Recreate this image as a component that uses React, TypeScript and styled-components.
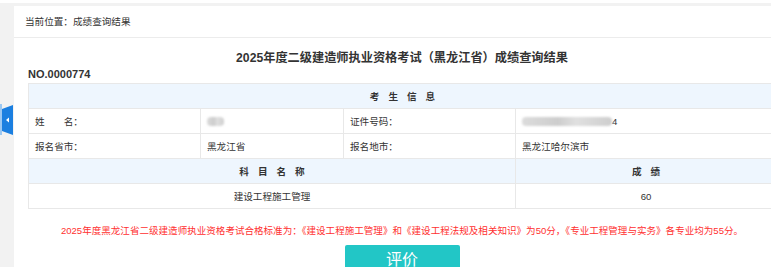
import React from "react";
import styled, { createGlobalStyle } from "styled-components";

const GlobalStyle = createGlobalStyle`
  html, body {
    margin: 0;
    padding: 0;
    background: #fff;
  }
  body {
    font-family: "Liberation Sans", "Noto Sans CJK SC", sans-serif;
    color: #333;
  }
  * {
    box-sizing: border-box;
  }
`;

const Page = styled.div`
  position: relative;
  width: 771px;
  height: 264px;
  margin-top: 3px;
  padding: 3px 0 0 14px;
  background: #f2f2f2;
  overflow: hidden;
`;

const Panel = styled.div`
  width: 776px;
  min-height: 300px;
  background: #fff;
`;

const Crumb = styled.div`
  height: 32px;
  line-height: 31px;
  padding-left: 11px;
  font-size: 9.6px;
  color: #333;
  border-bottom: 1px solid #ececec;
`;

const Body = styled.div`
  padding: 0 14px;
`;

const Title = styled.h1`
  margin: 0;
  padding-top: 12px;
  line-height: 16px;
  font-size: 12.2px;
  font-weight: bold;
  text-align: center;
  color: #333;
`;

const SerialNo = styled.div`
  margin: 2px 0 2px;
  line-height: 13px;
  font-size: 11px;
  font-weight: bold;
  color: #333;
`;

const Table = styled.table`
  width: 748px;
  border-collapse: collapse;
  table-layout: fixed;
  font-size: 9.6px;
  color: #333;
`;

const Cell = styled.td<{ $head?: boolean; $center?: boolean }>`
  height: 25px;
  padding: 0 6px;
  border: 1px solid #e8e8e8;
  background: ${(p) => (p.$head ? "#eef6fe" : "#fff")};
  font-weight: ${(p) => (p.$head ? "bold" : "normal")};
  text-align: ${(p) => (p.$center || p.$head ? "center" : "left")};
  white-space: nowrap;
`;

const Spaced = styled.span`
  letter-spacing: 9px;
  padding-left: 9px;
`;

const Blur = styled.span<{ $w: number }>`
  display: inline-block;
  width: ${(p) => p.$w}px;
  height: 9px;
  vertical-align: middle;
  border-radius: 4px;
  background: linear-gradient(90deg, #dcdcdc, #cdcdcd 40%, #e0e0e0 60%, #cecece);
  filter: blur(1.2px);
`;

const Notice = styled.p`
  margin: 15px 0 0;
  line-height: 14px;
  font-size: 9.55px;
  color: #ff3030;
  text-align: center;
  white-space: nowrap;
`;

const Actions = styled.div`
  display: flex;
  justify-content: center;
  margin-top: 7px;
`;

const RateButton = styled.button`
  display: flex;
  justify-content: center;
  align-items: flex-start;
  width: 115px;
  height: 32px;
  padding: 5px 0 0;
  border: none;
  border-radius: 2px;
  background: #22c6c6;
  color: #fff;
  font-family: "Noto Sans CJK SC", sans-serif;
  font-size: 16px;
  line-height: 16px;
`;

const SideTab = styled.svg`
  position: absolute;
  left: 0;
  top: 101px;
`;

export default function App() {
  return (
    <>
      <GlobalStyle />
      <Page>
        <Panel>
          <Crumb>当前位置：成绩查询结果</Crumb>
          <Body>
            <Title>2025年度二级建造师执业资格考试（黑龙江省）成绩查询结果</Title>
            <SerialNo>NO.0000774</SerialNo>
            <Table>
              <colgroup>
                <col style={{ width: 172 }} />
                <col style={{ width: 143 }} />
                <col style={{ width: 172 }} />
                <col style={{ width: 261 }} />
              </colgroup>
              <tbody>
                <tr>
                  <Cell $head colSpan={4}>
                    <Spaced>考生信息</Spaced>
                  </Cell>
                </tr>
                <tr>
                  <Cell>姓　　名：</Cell>
                  <Cell>
                    <Blur $w={17} />
                  </Cell>
                  <Cell>证件号码：</Cell>
                  <Cell>
                    <Blur $w={90} />4
                  </Cell>
                </tr>
                <tr>
                  <Cell>报名省市：</Cell>
                  <Cell>黑龙江省</Cell>
                  <Cell>报名地市：</Cell>
                  <Cell>黑龙江哈尔滨市</Cell>
                </tr>
                <tr>
                  <Cell $head colSpan={3}>
                    <Spaced>科目名称</Spaced>
                  </Cell>
                  <Cell $head>
                    <Spaced>成绩</Spaced>
                  </Cell>
                </tr>
                <tr>
                  <Cell $center colSpan={3}>
                    建设工程施工管理
                  </Cell>
                  <Cell $center>60</Cell>
                </tr>
              </tbody>
            </Table>
            <Notice>
              2025年度黑龙江省二级建造师执业资格考试合格标准为：《建设工程施工管理》和《建设工程法规及相关知识》为50分，《专业工程管理与实务》各专业均为55分。
            </Notice>
            <Actions>
              <RateButton>评价</RateButton>
            </Actions>
          </Body>
        </Panel>
        <SideTab width="14" height="32" viewBox="0 0 14 32">
          <rect x="0" y="0" width="2" height="31" fill="#9cc8f2" />
          <polygon points="2,5 13,1 13,31 2,27" fill="#1b7fe0" />
          <polygon points="6,16 9,13.5 9,18.5" fill="#fff" />
        </SideTab>
      </Page>
    </>
  );
}
